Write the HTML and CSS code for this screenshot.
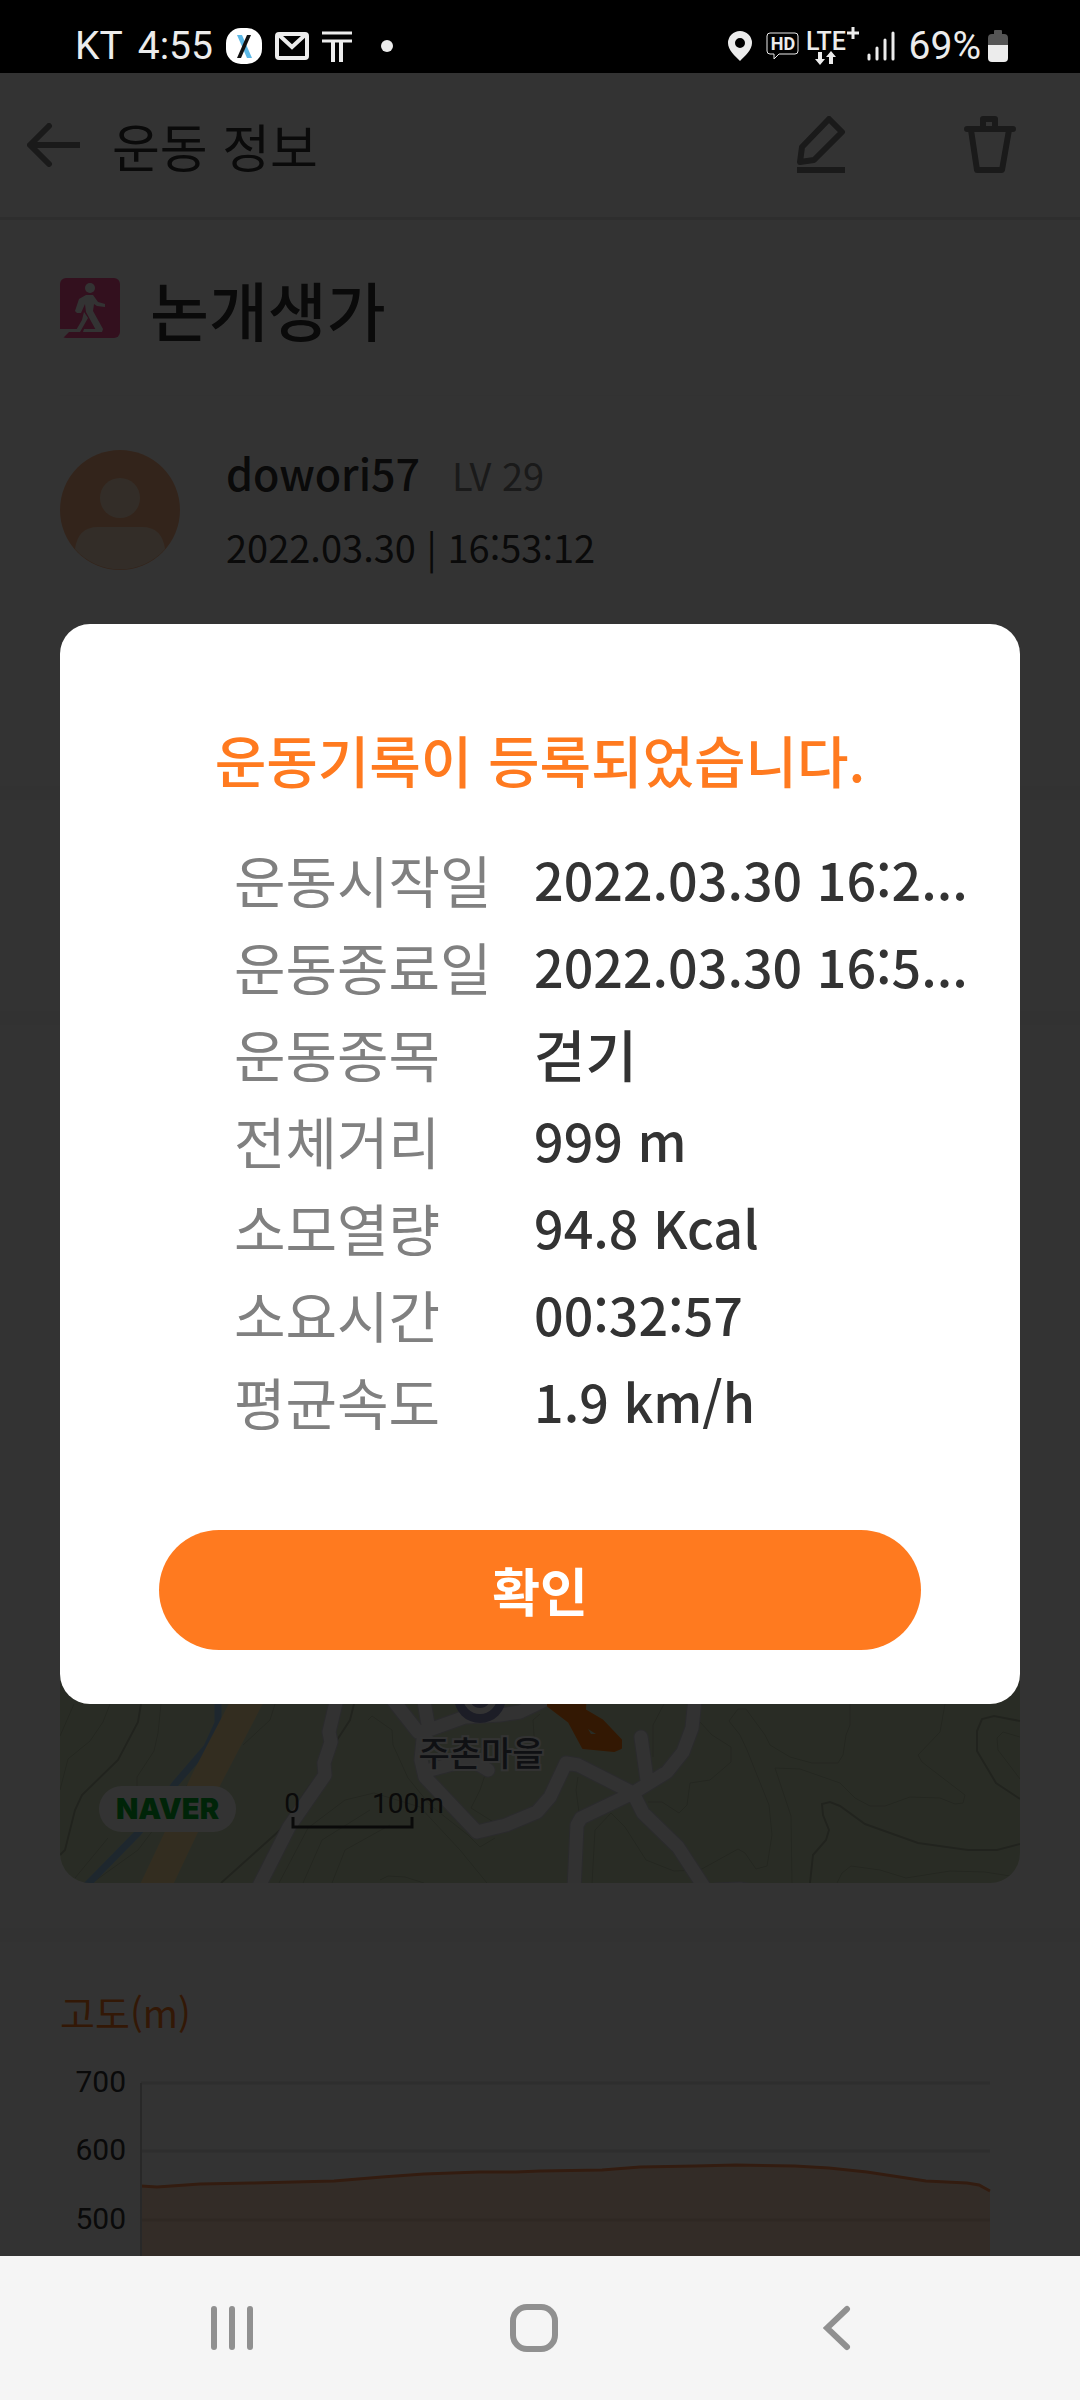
FILE: index.html
```html
<!doctype html>
<html lang="ko">
<head>
    <meta charset="utf-8">
    <meta name="viewport" content="width=device-width, initial-scale=1.0">
    <title>운동 정보</title>
    <link rel="stylesheet" href="styles.css">
</head>
<body>
    <div class="status-bar">
        <div class="status-left">
            <span>KT</span>
            <span class="clock">4:55</span>
            <svg class="status-app" width="36" height="36" viewBox="0 0 36 36">
                <rect width="36" height="36" rx="15" fill="#fff"/>
                <path d="M11 7h5l10 23h-5z" fill="#5cb8e6"/>
                <path d="M21 7h4L15 30h-4z" fill="#111"/>
            </svg>
            <svg width="34" height="28" viewBox="0 0 34 28" fill="none" stroke="#ececec" stroke-width="4">
                <rect x="2" y="2" width="30" height="24" rx="2"/>
                <path d="M4 3 17 15 30 3"/>
            </svg>
            <svg width="30" height="31" viewBox="0 0 30 31" fill="none" stroke="#ececec">
                <path d="M0 2h30M0 10h30" stroke-width="3"/>
                <path d="M11 9v22M19 9v22" stroke-width="4"/>
            </svg>
            <span class="status-dot"></span>
        </div>
        <div class="status-right">
            <svg class="pin" width="24" height="30" viewBox="0 0 24 30">
                <path d="M12 0a12 12 0 0 0-12 12c0 7 7 13 12 18 5-5 12-11 12-18a12 12 0 0 0-12-12zm0 7a5 5 0 1 1 0 10 5 5 0 0 1 0-10z" fill="#ececec" fill-rule="evenodd"/>
            </svg>
            <svg width="33" height="28" viewBox="0 0 33 28">
                <path d="M4 1h25q3 0 3 3v15q0 3-3 3H13l-5 5v-5H4q-3 0-3-3V4q0-3 3-3z" fill="none" stroke="#ececec" stroke-width="1"/>
                <text class="svg-hd" x="17" y="18" text-anchor="middle">HD</text>
            </svg>
            <svg class="lte" width="54" height="40" viewBox="0 0 54 40">
                <text class="svg-lte" x="0" y="24">LTE</text>
                <path d="M41 7h12M47 1v12" stroke="#ececec" stroke-width="3"/>
                <path d="M12 26h4v7h3l-5 6-5-6h3zM23 38h4v-7h3l-5-6-5 6h3z" fill="#ececec"/>
            </svg>
            <svg class="signal" width="28" height="30" viewBox="0 0 28 30" stroke="#ececec" stroke-width="3" stroke-linecap="round">
                <path d="M2 24v4M10 17v11M18 9v19M26 2v26"/>
            </svg>
            <span>69%</span>
            <svg width="20" height="32" viewBox="0 0 20 32">
                <path d="M6 1q0-1 1-1h6q1 0 1 1v3h2q4 0 4 4v8H0V8q0-4 4-4h2z" fill="#555"/>
                <path d="M0 15h20v13q0 4-4 4H4q-4 0-4-4z" fill="#ececec"/>
            </svg>
        </div>
    </div>

    <div class="app">
        <header class="app-header">
            <button class="icon-btn" aria-label="뒤로">
                <svg width="54" height="44" viewBox="0 0 54 44" fill="none" stroke="#808080" stroke-width="6" stroke-linecap="round" stroke-linejoin="round">
                    <path d="M22 3 3 22l19 19"/>
                    <path d="M3 22h50" stroke-linecap="butt"/>
                </svg>
            </button>
            <h1>운동 정보</h1>
            <button class="icon-btn edit-btn" aria-label="수정">
                <svg width="50" height="58" viewBox="0 0 50 58" fill="none" stroke="#808080" stroke-width="6" stroke-linejoin="round">
                    <path d="M4 46 6 31 33 3 46 16 18 44z"/>
                    <path d="M1 54h48"/>
                </svg>
            </button>
            <button class="icon-btn" aria-label="삭제">
                <svg width="52" height="58" viewBox="0 0 52 58" fill="none" stroke="#808080" stroke-width="6" stroke-linecap="round" stroke-linejoin="round">
                    <path d="M3 13h46M19 12V3h12v9"/>
                    <path d="M7 14 13 54h25L45 14"/>
                </svg>
            </button>
        </header>

        <section class="workout">
            <div class="workout-title">
                <svg width="60" height="60" viewBox="0 0 60 60">
                    <rect width="60" height="60" rx="6" fill="#ff5096"/>
                    <path d="M0 51H19L16 54H9L3 60H0zM24 51h14v3H23z" fill="#fff"/>
                    <circle cx="30" cy="10" r="5" fill="#fff"/>
                    <path d="M26 17h7l5 7 7 2v3l-8-1-3-2-1 7 10 18-1 3h-5L26 34l-1-8-4 9h-4l-2-2 4-12z" fill="#fff"/>
                    <path d="M24 34 28 40 20 54H15L22 42z" fill="#fff"/>
                </svg>
                <h2>논개생가</h2>
            </div>
            <div class="profile">
                <svg width="120" height="120" viewBox="0 0 120 120">
                    <circle cx="60" cy="60" r="60" fill="#ffb487"/>
                    <circle cx="60" cy="48" r="20" fill="#ffe1c8"/>
                    <path d="M15 99Q18 77 38 77H82Q102 77 105 99A60 60 0 0 1 15 99z" fill="#ffe1c8"/>
                </svg>
                <div>
                    <p><span class="user-name">dowori57</span><span class="user-level">LV 29</span></p>
                    <p>2022.03.30 | 16:53:12</p>
                </div>
            </div>
        </section>
        <section class="summary"></section>

        <section class="map-section">
            <div class="map">
                <svg viewBox="60 1283 960 600" preserveAspectRatio="xMidYMax slice">
                    <g class="contour">
                        <path d="M74 1704 60 1736M110 1704 103 1722 90 1741 68 1759 60 1790M161 1704 158 1733 154 1751 137 1777 137 1790M275 1704 270 1720 243 1745M191 1780 138 1850 92 1883M75 1878 108 1838"/>
                        <path d="M368 1720 372 1716 392 1730 393 1745 408 1778 430 1805 468 1835 480 1847 495 1838M279 1883 308 1828 345 1800 374 1793 420 1807 460 1850 487 1883M303 1883 322 1840 370 1810M332 1883 345 1850 390 1825M380 1880 388 1876 405 1877 424 1883M540 1714 533 1720 535 1750M485 1775 480 1790 471 1808 495 1823"/>
                        <path d="M664 1704 653 1725 653 1757M700 1722 712 1735 731 1747 731 1762 710 1780 690 1783 687 1805 679 1813 662 1802 648 1802M592 1884 595 1830 611 1813 625 1827 646 1860 674 1871 700 1870 738 1849 745 1853 756 1869 767 1866 772 1835 769 1805 747 1750 740 1735 729 1721 738 1709 746 1709 765 1735 770 1745 790 1757 812 1763 838 1763 843 1755 846 1735 850 1725 850 1704"/>
                        <path d="M945 1704 940 1732 918 1755 922 1762 965 1795 963 1803 955 1804 940 1798 910 1797 885 1806 870 1806 855 1798 840 1783 800 1769 775 1768 791 1816 792 1883M837 1883 842 1873 851 1866 880 1870 906 1878 950 1871 985 1872 1010 1876M1020 1737 1003 1732 997 1738 998 1750 1020 1779M578 1777 576 1790 579 1812"/>
                    </g>
                    <g class="contour-main">
                        <path d="M141 1704 138 1722 118 1760 82 1795 75 1810 65 1850 60 1855M354 1704 350 1720 337 1740M317 1777 310 1785 280 1830 221 1883"/>
                        <path d="M1020 1721 994 1716 982 1719 977 1731 977 1751 996 1783 1020 1799M1020 1844 997 1850 968 1850 918 1843 865 1824 840 1806 830 1802 822 1804 823 1815 829 1830 826 1840 813 1855 810 1883"/>
                    </g>
                    <path d="M218 1690V1723L207 1747 176 1783 138 1833 84 1888" fill="none" stroke="#96c3e6" stroke-width="7"/>
                    <path d="M253 1690 206 1780 154 1890" fill="none" stroke="#fde1a0" stroke-width="30"/>
                    <g class="road-edge">
                        <path id="roads" d="M339 1690 329 1732 331 1742 324 1763 325 1775 289 1827 257 1890M385 1690 418 1732 429 1730 465 1717 500 1715 520 1712 545 1700M422 1690 429 1730 423 1740 421 1760 425 1777 477 1832 506 1825 537 1812 550 1797 566 1763 578 1765 633 1793 643 1813 678 1847 706 1890M633 1793 581 1818 577 1825 574 1890M633 1793 667 1772 683 1752 692 1728 696 1690M647 1780 641 1737M430 1770 460 1762 475 1762 488 1770M716 1890 740 1889 758 1892"/>
                    </g>
                    <use class="road" href="#roads"/>
                    <path d="M548 1690h38l-1 20 17 10 19 20v8l-7 3-31-3-14-26-21-16z" fill="#ff7a0f" stroke="#ff7a0f" stroke-width="2" stroke-linejoin="round"/>
                    <path d="M588 1729l3 5 5 0z" fill="#cddcb9"/>
                    <circle cx="480" cy="1697" r="26" fill="#8c91be"/>
                    <circle cx="480" cy="1697" r="14" fill="none" stroke="#fff" stroke-width="6"/>
                    <text class="map-place" x="481" y="1766" text-anchor="middle">주촌마을</text>
                    <text class="map-scale" x="292" y="1813" text-anchor="middle">0</text>
                    <text class="map-scale" x="408" y="1813" text-anchor="middle">100m</text>
                    <path d="M293 1817v10h119v-10" fill="none" stroke="#333" stroke-width="3"/>
                </svg>
                <span class="naver">NAVER</span>
            </div>
        </section>

        <section class="altitude">
            <h3>고도(m)</h3>
            <svg viewBox="0 2060 1080 340">
                <path d="M141 2083h849M141 2151h849M141 2220h849" stroke="#e4e4e4" stroke-width="3"/>
                <path d="M141 2186 157 2187 200 2184 251 2183 334 2181 382 2177 424 2174 479 2172 516 2172 540 2171 602 2170 640 2167 695 2166 736 2165 795 2166 829 2168 867 2172 926 2181 967 2183 979 2185 990 2191V2400H141z" fill="#ff8237" fill-opacity="0.3"/>
                <path d="M141 2186 157 2187 200 2184 251 2183 334 2181 382 2177 424 2174 479 2172 516 2172 540 2171 602 2170 640 2167 695 2166 736 2165 795 2166 829 2168 867 2172 926 2181 967 2183 979 2185 990 2191" fill="none" stroke="#ff8c50" stroke-width="3"/>
                <path d="M141 2083v317" stroke="#c8c8c8" stroke-width="2"/>
                <g class="axis-label" text-anchor="end">
                    <text x="126" y="2092">700</text>
                    <text x="126" y="2160">600</text>
                    <text x="126" y="2229">500</text>
                </g>
            </svg>
        </section>

        <div class="backdrop">
            <div class="modal" role="dialog" aria-labelledby="modal-title">
                <h2 id="modal-title">운동기록이 등록되었습니다.</h2>
                <dl class="record">
                    <dt>운동시작일</dt><dd>2022.03.30 16:2...</dd>
                    <dt>운동종료일</dt><dd>2022.03.30 16:5...</dd>
                    <dt>운동종목</dt><dd class="kind">걷기</dd>
                    <dt>전체거리</dt><dd>999 m</dd>
                    <dt>소모열량</dt><dd>94.8 Kcal</dd>
                    <dt>소요시간</dt><dd>00:32:57</dd>
                    <dt>평균속도</dt><dd>1.9 km/h</dd>
                </dl>
                <button class="confirm">확인</button>
            </div>
        </div>
    </div>

    <nav class="nav-bar">
        <button aria-label="최근 앱">
            <svg width="44" height="48" viewBox="0 0 44 48" stroke="#909090" stroke-width="6" stroke-linecap="round">
                <path d="M4 5v38M22 5v38M40 5v38"/>
            </svg>
        </button>
        <button aria-label="홈">
            <svg width="48" height="48" viewBox="0 0 48 48" fill="none" stroke="#909090" stroke-width="6">
                <rect x="3" y="3" width="42" height="42" rx="14"/>
            </svg>
        </button>
        <button aria-label="뒤로 가기">
            <svg width="28" height="48" viewBox="0 0 28 48" fill="none" stroke="#909090" stroke-width="6" stroke-linecap="round">
                <path d="M24 5 4 24l20 19"/>
            </svg>
        </button>
    </nav>
</body>
</html>
```
FILE: styles.css
```css
* {
    box-sizing: border-box;
}
body {
    font-family: "Noto Sans CJK KR", sans-serif;
    background-color: #fff;
    color: #333;
    margin: 0;
    height: 100vh;
    display: flex;
    flex-direction: column;
}
h1, h2, h3, p, dl, dd {
    margin: 0;
}
button {
    border: none;
    background: none;
    padding: 0;
    cursor: pointer;
    font-family: inherit;
}
svg {
    display: block;
}

/* status bar */
.status-bar {
    height: 73px;
    flex: none;
    background-color: #000;
    color: #ececec;
    font-family: Roboto, sans-serif;
    font-size: 39px;
    line-height: 40px;
    padding: 18px 72px 0 75px;
    display: flex;
    justify-content: space-between;
}
.status-left, .status-right {
    display: flex;
    align-items: center;
    height: 56px;
}
.status-left {
    gap: 13px;
}
.clock {
    margin-left: 2px;
}
.status-dot {
    width: 12px;
    height: 12px;
    margin-left: 16px;
    border-radius: 50%;
    background-color: #ececec;
}
.status-right {
    gap: 7px;
}
.pin, .signal {
    margin-right: 7px;
}
.svg-hd {
    font: bold 18px Roboto, sans-serif;
    fill: #ececec;
}
.svg-lte {
    font: 500 25px Roboto, sans-serif;
    fill: #ececec;
}

/* app */
.app {
    flex: 1;
    min-height: 0;
    position: relative;
    overflow: hidden;
}
.app-header {
    height: 147px;
    padding: 0 64px 0 27px;
    border-bottom: 3px solid #e4e4e4;
    display: flex;
    align-items: center;
}
.app-header h1 {
    flex: 1;
    margin-left: 31px;
    font-size: 52px;
    font-weight: 400;
}
.edit-btn {
    margin-right: 118px;
}
.workout {
    height: 580px;
    padding: 0 60px;
    border-bottom: 14px solid #fafafa;
}
.workout-title {
    height: 176px;
    display: flex;
    align-items: center;
    gap: 30px;
    border-bottom: 1px solid #fafafa;
}
.workout-title h2 {
    font-size: 64px;
    font-weight: 500;
}
.profile {
    padding-top: 40px;
    display: flex;
    align-items: center;
    gap: 46px;
}
.profile p {
    font-size: 38px;
    line-height: 72px;
}
.user-name {
    font-size: 43px;
    font-weight: 500;
}
.user-level {
    margin-left: 32px;
    color: #808080;
}
.summary {
    height: 225px;
    border-bottom: 14px solid #fafafa;
}
.map-section {
    padding: 258px 60px 45px;
    border-bottom: 14px solid #fafafa;
}
.map {
    position: relative;
    height: 600px;
    border-radius: 30px;
    overflow: hidden;
    background-color: #cddcb9;
}
.map svg {
    width: 100%;
    height: 100%;
}
.contour, .contour-main {
    fill: none;
    stroke: #b4c0a2;
    stroke-width: 1px;
}
.contour-main {
    stroke: #a5b094;
    stroke-width: 2px;
}
.road-edge, .road {
    fill: none;
    stroke: #fafafa;
    stroke-width: 13px;
    stroke-linecap: round;
    stroke-linejoin: round;
}
.road-edge {
    stroke: #d2d2dc;
    stroke-width: 15px;
}
.map-place {
    font: 500 34px "Noto Sans CJK KR", sans-serif;
    fill: #4b505f;
    stroke: #fff;
    stroke-width: 4px;
    paint-order: stroke;
}
.map-scale {
    font: 28px Roboto, sans-serif;
    fill: #333;
}
.naver {
    position: absolute;
    left: 39px;
    bottom: 51px;
    padding: 0 17px;
    border-radius: 24px;
    background-color: #fff;
    color: #00b428;
    font-family: Inter, sans-serif;
    font-size: 29px;
    font-weight: 900;
    line-height: 46px;
}
.altitude h3 {
    padding: 40px 60px 0;
    color: #ff7a1f;
    font-size: 38px;
    font-weight: 400;
    line-height: 60px;
}
.altitude svg {
    width: 100%;
    margin-top: 18px;
}
.axis-label {
    font: 30px Roboto, sans-serif;
    fill: #333;
}

/* modal */
.backdrop {
    position: absolute;
    inset: 0;
    background-color: rgba(0, 0, 0, 0.8);
    display: flex;
    align-items: center;
    padding: 0 60px 2px;
}
.modal {
    flex: 1;
    min-width: 0;
    padding: 91px 48px 54px;
    border-radius: 30px;
    background-color: #fff;
}
.modal h2 {
    color: #ff7a1f;
    font-size: 56px;
    font-weight: 500;
    line-height: 87px;
    text-align: center;
}
.record {
    margin: 33px 0 86px 126px;
    display: grid;
    grid-template-columns: 300px 1fr;
    font-size: 56px;
    line-height: 87px;
}
.record dt {
    color: #808080;
}
.record dd {
    font-size: 52px;
    font-weight: 500;
    white-space: nowrap;
}
.record .kind {
    font-size: 56px;
}
.confirm {
    display: block;
    width: calc(100% - 102px);
    height: 120px;
    margin: 0 auto;
    border-radius: 60px;
    background-color: #ff7a1f;
    color: #fff;
    font-size: 52px;
    font-weight: 700;
}

/* navigation */
.nav-bar {
    flex: none;
    height: 144px;
    padding: 0 92px 0 81px;
    background-color: #f5f5f5;
    display: flex;
}
.nav-bar button {
    flex: 1;
    display: flex;
    align-items: center;
    justify-content: center;
}
```
